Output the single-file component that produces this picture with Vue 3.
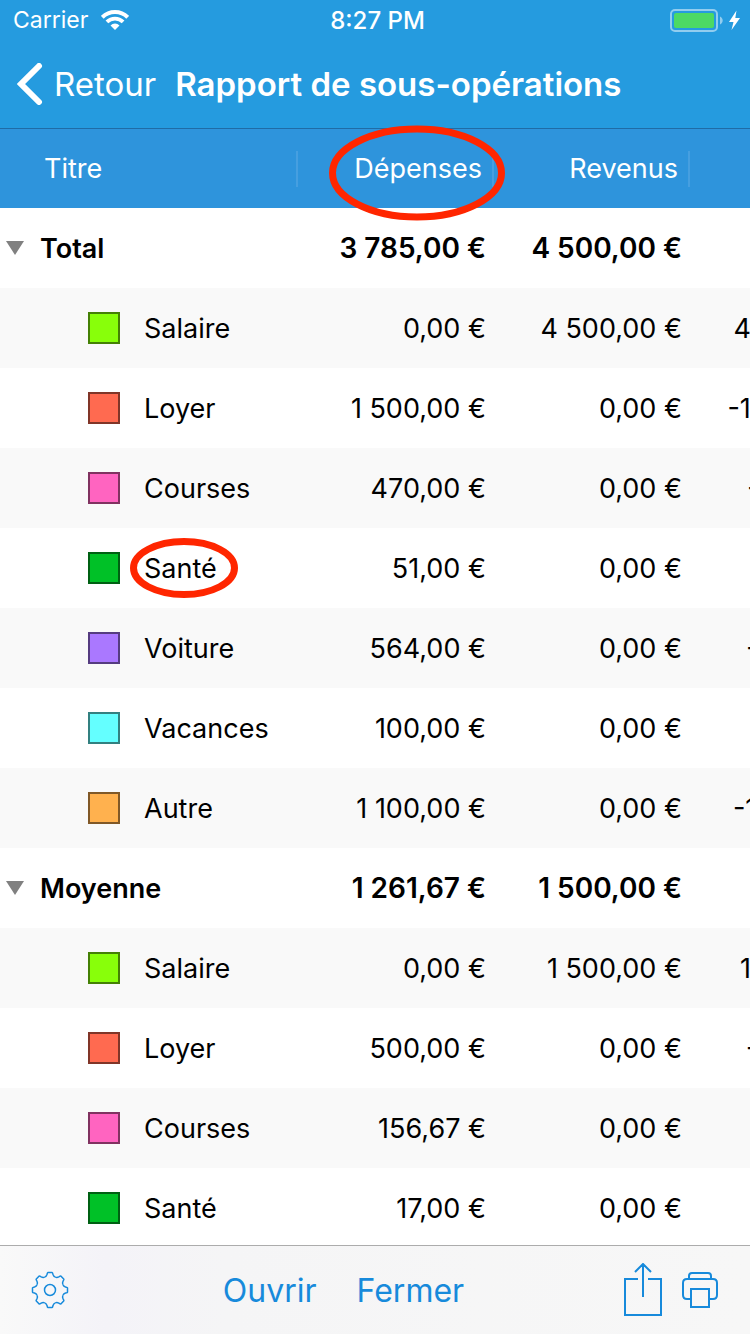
<script setup>
import { ref } from 'vue'

const colors = {
  Salaire: ['#88ff0a', '#448005'],
  Loyer: ['#ff6a50', '#803528'],
  Courses: ['#ff64c0', '#803260'],
  Santé: ['#00c127', '#006013'],
  Voiture: ['#aa78ff', '#553c80'],
  Vacances: ['#64ffff', '#328080'],
  Autre: ['#ffb14e', '#805827'],
}

const groups = ref([
  {
    title: 'Total',
    open: true,
    values: ['3 785,00 €', '4 500,00 €', '715,00 €'],
    rows: [
      ['Salaire', '0,00 €', '4 500,00 €', '4 500,00 €'],
      ['Loyer', '1 500,00 €', '0,00 €', '-1 500,00 €'],
      ['Courses', '470,00 €', '0,00 €', '-470,00 €'],
      ['Santé', '51,00 €', '0,00 €', '-51,00 €'],
      ['Voiture', '564,00 €', '0,00 €', '-564,00 €'],
      ['Vacances', '100,00 €', '0,00 €', '-100,00 €'],
      ['Autre', '1 100,00 €', '0,00 €', '-1 100,00 €'],
    ],
  },
  {
    title: 'Moyenne',
    open: true,
    values: ['1 261,67 €', '1 500,00 €', '238,33 €'],
    rows: [
      ['Salaire', '0,00 €', '1 500,00 €', '1 500,00 €'],
      ['Loyer', '500,00 €', '0,00 €', '-500,00 €'],
      ['Courses', '156,67 €', '0,00 €', '-156,67 €'],
      ['Santé', '17,00 €', '0,00 €', '-17,00 €'],
    ],
  },
])

const teeth = [0, 45, 90, 135, 180, 225, 270, 315]
</script>

<template>
  <div class="app">
    <header class="top">
      <div class="status">
        <div class="carrier">
          <span>Carrier</span>
          <svg width="28" height="20" viewBox="0 0 28 20" fill="none" stroke="#fff" aria-hidden="true">
            <path d="M1.300 7.300A18 18 0 0 1 26.700 7.300" stroke-width="4" />
            <path d="M5.900 11.900A11.500 11.500 0 0 1 22.100 11.900" stroke-width="3.800" />
            <path d="M14 20L9.500 15.500A6.300 6.300 0 0 1 18.500 15.500z" fill="#fff" stroke="none" />
          </svg>
        </div>
        <span class="clock">8:27 PM</span>
        <div class="power">
          <svg width="72" height="24" viewBox="0 0 72 24" aria-hidden="true">
            <rect x="1" y="2" width="46" height="21" rx="4" fill="none" stroke="#92cdef" stroke-width="2" />
            <rect x="4" y="5" width="40" height="15" rx="2" fill="#4cd964" />
            <path d="M50 8.500c3.600 1.500 3.600 6.500 0 8z" fill="#92cdef" />
            <path d="M66.500 2.500L59 14h4.500l-2 8L70 10h-4.700z" fill="#fff" />
          </svg>
        </div>
      </div>
      <nav class="nav">
        <button class="back" type="button">
          <svg width="26" height="42" viewBox="0 0 26 42" fill="none" stroke="#fff" stroke-width="6" stroke-linecap="round" stroke-linejoin="miter" aria-hidden="true">
            <path d="M22 3L4 21l18 18" />
          </svg>
          Retour
        </button>
        <h1>Rapport de sous-opérations</h1>
      </nav>
    </header>

    <main class="report">
      <div class="scroller">
        <table>
          <colgroup>
            <col class="col-title" />
            <col class="col-amount" />
            <col class="col-amount" />
            <col class="col-amount" />
          </colgroup>
          <thead>
            <tr>
              <th scope="col"><div class="head first">Titre</div></th>
              <th scope="col"><div class="head">Dépenses</div></th>
              <th scope="col"><div class="head">Revenus</div></th>
              <th scope="col"><div class="head">Solde</div></th>
            </tr>
          </thead>
          <tbody v-for="g in groups" :key="g.title">
            <tr class="group">
              <th scope="row">
                <button class="toggle" type="button" :aria-expanded="g.open" @click="g.open = !g.open">
                  <svg :class="{ closed: !g.open }" width="18" height="14" viewBox="0 0 18 14" aria-hidden="true">
                    <path d="M0 0h18L9 14z" fill="#808080" />
                  </svg>
                  {{ g.title }}
                </button>
              </th>
              <td v-for="(v, i) in g.values" :key="i">{{ v }}</td>
            </tr>
            <template v-if="g.open">
              <tr v-for="r in g.rows" :key="r[0]">
                <th scope="row">
                  <div class="category">
                    <span class="swatch" :style="{ background: colors[r[0]][0], borderColor: colors[r[0]][1] }"></span>
                    {{ r[0] }}
                  </div>
                </th>
                <td>{{ r[1] }}</td>
                <td>{{ r[2] }}</td>
                <td>{{ r[3] }}</td>
              </tr>
            </template>
          </tbody>
        </table>
      </div>
      <svg class="mark mark-column" width="176" height="96" viewBox="0 0 176 96" aria-hidden="true">
        <ellipse cx="88" cy="48" rx="84.500" ry="44" />
      </svg>
      <svg class="mark mark-row" width="108" height="60" viewBox="0 0 108 60" aria-hidden="true">
        <ellipse cx="54" cy="30" rx="50.500" ry="26.500" />
      </svg>
    </main>

    <footer class="toolbar">
      <button type="button" aria-label="Réglages">
        <svg width="38" height="38" viewBox="-19 -19 38 38" fill="none" stroke="currentColor" stroke-width="1.500" stroke-linejoin="round">
          <path v-for="a in teeth" :key="a" :transform="`rotate(${a})`" d="M-5.400-13C-3.800-13.200-3.500-14-3-15.500Q-2.600-17.500-2.200-17.500H2.200Q2.600-17.500 3-15.500C3.500-14 3.800-13.200 5.400-13" />
          <circle r="5.500" />
        </svg>
      </button>
      <div class="actions">
        <button type="button">Ouvrir</button>
        <button type="button">Fermer</button>
      </div>
      <div class="tools">
        <button type="button" aria-label="Partager">
          <svg width="38" height="54" viewBox="0 0 38 54" fill="none" stroke="currentColor" stroke-width="2">
            <path d="M14 16H1v36h36V16H24M19 34V1M11 9l8-8 8 8" />
          </svg>
        </button>
        <button type="button" aria-label="Imprimer">
          <svg width="36" height="36" viewBox="0 0 36 36" fill="none" stroke="currentColor" stroke-width="2">
            <path d="M7 7V4q0-3 3-3h16q3 0 3 3v3M9 27H5q-4 0-4-4V11q0-4 4-4h26q4 0 4 4v12q0 4-4 4h-4" />
            <path d="M9 17h18v18H9z" />
          </svg>
        </button>
      </div>
    </footer>
  </div>
</template>

<style>
body {
  margin: 0;
}
</style>

<style scoped>
.app {
  display: flex;
  flex-direction: column;
  height: 100vh;
  overflow: hidden;
  background: #fff;
  color: #000;
  font-family: Inter, "Liberation Sans", sans-serif;
  font-size: 27px;
}
button {
  padding: 0;
  border: 0;
  background: none;
  color: inherit;
  font: inherit;
  cursor: pointer;
}
svg {
  display: block;
  flex: none;
}
.top {
  background: #259bdf;
  color: #fff;
  border-bottom: 1px solid #1f6ca6;
}
.status {
  display: grid;
  grid-template-columns: 1fr auto 1fr;
  align-items: center;
  height: 40px;
  padding: 0 8px 0 13px;
  font-size: 24px;
}
.carrier {
  display: flex;
  align-items: center;
  gap: 13px;
  font-size: 23px;
}
.clock {
  font-weight: 500;
}
.power {
  display: flex;
  justify-content: flex-end;
}
.nav {
  display: flex;
  align-items: center;
  gap: 19px;
  height: 88px;
  padding: 0 17px;
}
.back {
  display: flex;
  align-items: center;
  gap: 11px;
  font-size: 33px;
}
h1 {
  margin: 0;
  font-size: 33px;
  font-weight: 600;
  white-space: nowrap;
}
.report {
  position: relative;
  flex: 1;
  min-height: 0;
}
.scroller {
  height: 100%;
  overflow: auto;
  scrollbar-width: none;
}
table {
  width: 886px;
  table-layout: fixed;
  border-collapse: collapse;
}
.col-title {
  width: 298px;
}
.col-amount {
  width: 196px;
}
th,
td {
  height: 80px;
  padding: 0 8px 0 0;
  font-weight: 400;
  text-align: right;
  white-space: nowrap;
}
td:last-child {
  padding-right: 11px;
}
th {
  padding: 0;
}
thead th {
  height: 79px;
  background: #2e94dc;
  color: #fff;
}
.head {
  padding-right: 10px;
  border-right: 2px solid #469fe0;
  line-height: 36px;
}
.first {
  padding-left: 44px;
  text-align: left;
}
tbody tr:nth-child(even) {
  background: #f9f9f9;
}
.group th,
.group td {
  font-weight: 600;
}
.group td {
  font-size: 28px;
}
.toggle {
  display: flex;
  align-items: center;
  gap: 16px;
  padding-left: 6px;
}
.closed {
  transform: rotate(-90deg);
}
.category {
  display: flex;
  align-items: center;
  gap: 24px;
  padding-left: 88px;
}
.swatch {
  box-sizing: border-box;
  width: 32px;
  height: 32px;
  border: 2px solid;
}
.mark {
  position: absolute;
  fill: none;
  stroke: #ff2600;
  stroke-width: 7px;
  pointer-events: none;
}
.mark-column {
  top: -4px;
  left: 329px;
}
.mark-row {
  top: 409px;
  left: 130px;
}
.toolbar {
  display: flex;
  align-items: center;
  justify-content: space-between;
  height: 88px;
  padding: 0 32px 0 31px;
  border-top: 1px solid #acacac;
  background: linear-gradient(90deg, #f9f9f9, #f4f3f8 14%, #f5f5f6 30%, #f7f7f7);
  color: #178adb;
}
.actions {
  display: flex;
  gap: 40px;
  padding-right: 6px;
  font-size: 32px;
}
.tools {
  display: flex;
  align-items: center;
  gap: 20px;
}
</style>
